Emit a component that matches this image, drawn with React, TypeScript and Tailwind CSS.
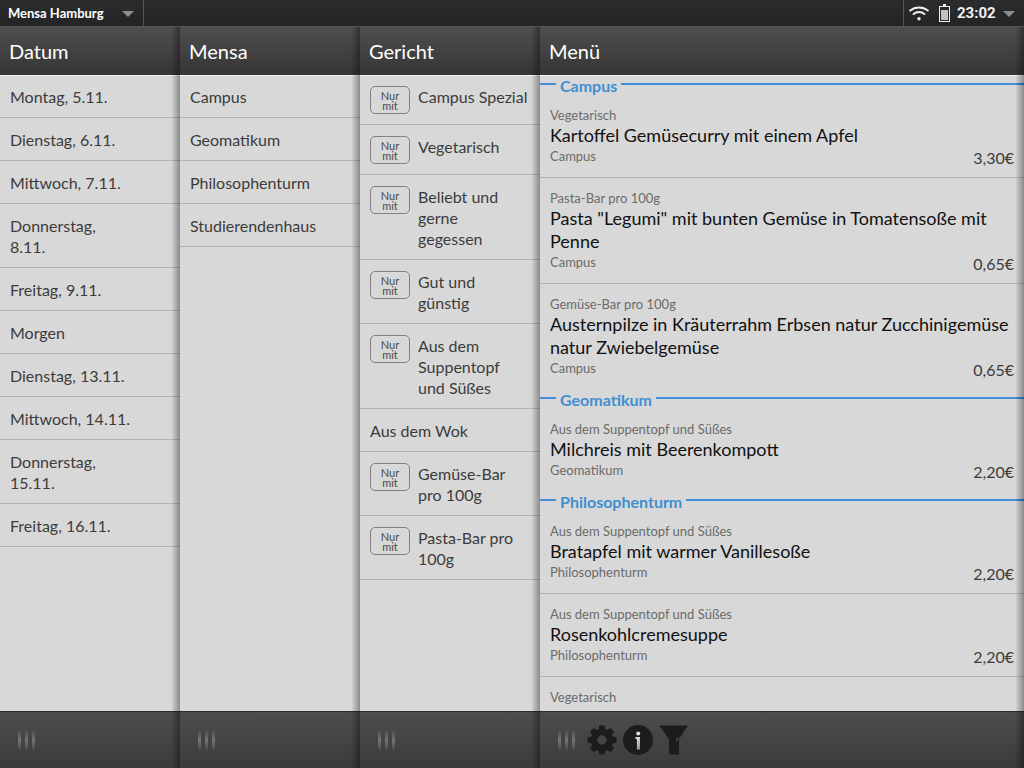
import React from "react";

const Shadow = () => (
  <div className="absolute right-0 top-0 bottom-0 w-[9px] bg-gradient-to-r from-[#00000000] to-[#0000005c] pointer-events-none" />
);

const GripLine = () => (
  <div className="w-[3px] h-[21px] bg-gradient-to-b from-[#4a4a4a] via-[#757575] to-[#454545]" />
);

const Grip = () => (
  <div className="flex gap-[4px] blur-[0.6px]">
    <GripLine />
    <GripLine />
    <GripLine />
  </div>
);

const Gear = () => (
  <svg width="30" height="30" viewBox="0 0 30 30" className="shrink-0">
    <g fill="#1c1c1c">
      {[0, 45, 90, 135, 180, 225, 270, 315].map((a) => (
        <path key={a} d="M11.5 5 L12.3 0.6 H17.7 L18.5 5 Z" transform={`rotate(${a} 15 15)`} />
      ))}
    </g>
    <circle cx="15" cy="15" r="8" fill="none" stroke="#1c1c1c" strokeWidth="6.5" />
  </svg>
);

const Info = () => (
  <svg width="30" height="30" viewBox="0 0 30 30" className="shrink-0">
    <defs>
      <linearGradient id="infoFill" x1="0" y1="0" x2="0" y2="1">
        <stop offset="0" stopColor="#e2e2e2" />
        <stop offset="1" stopColor="#9a9a9a" />
      </linearGradient>
    </defs>
    <circle cx="15" cy="15" r="15" fill="#1c1c1c" />
    <circle cx="15.2" cy="8.5" r="2" fill="#e2e2e2" />
    <path d="M12.5 12h4.4v12.5h-3V14h-1.4z" fill="url(#infoFill)" />
  </svg>
);

const Funnel = () => (
  <svg width="29" height="30" viewBox="0 0 29 30" className="shrink-0">
    <path d="M0 0.5h29L20 14v15.5H10V14z" fill="#1c1c1c" />
    <path d="M17.2 16.5l2.2-4.5" stroke="#6e6e6e" strokeWidth="0.9" fill="none" />
  </svg>
);

const Wifi = () => (
  <svg width="20" height="16" viewBox="0 0 20 16" className="shrink-0">
    <g fill="none" stroke="#f0f0f0" strokeWidth="2" strokeLinecap="round">
      <path d="M1.2 5.6C6 1.4 14 1.4 18.8 5.6" />
      <path d="M4.6 9C7.6 6.4 12.4 6.4 15.4 9" />
    </g>
    <circle cx="10" cy="13.8" r="1.7" fill="#f0f0f0" />
  </svg>
);

const Battery = () => (
  <svg width="11" height="18" viewBox="0 0 11 18" className="shrink-0">
    <rect x="4" y="0" width="3" height="2" fill="#f0f0f0" />
    <rect x="0.5" y="2.5" width="10" height="15" fill="none" stroke="#f0f0f0" strokeWidth="1" />
    <rect x="2" y="6" width="7" height="10" fill="#c0c0c0" />
  </svg>
);

const Triangle = () => (
  <div className="mt-[2px] w-0 h-0 border-l-[6.5px] border-r-[6.5px] border-t-[6px] border-l-transparent border-r-transparent border-t-[#8e8e8e]" />
);

const Header = ({ title }: { title: string }) => (
  <div className="h-[48px] shrink-0 px-[9px] flex items-center text-[20px] text-white bg-gradient-to-b from-[#4f4f4f] to-[#353535]">
    {title}
  </div>
);

const Footer = ({ children }: { children?: React.ReactNode }) => (
  <div className="h-[57px] shrink-0 pl-[18px] flex items-center bg-gradient-to-b from-[#4d4d4d] to-[#3b3b3b] border-t border-[#2b2b2b]">
    {children ?? <Grip />}
  </div>
);

const Row = ({ text }: { text: string }) => (
  <div className="px-[10px] pt-[11px] pb-[10px] text-[16px] leading-[21px] text-[#3c3c3c] border-b border-[#b4b4b4] whitespace-pre-line">
    {text}
  </div>
);

const Badge = () => (
  <div className="shrink-0 w-[40px] h-[28px] mr-[8px] pt-[1px] rounded-[5px] border border-[#808080] flex flex-col items-center justify-center text-[11px] leading-[10px] text-[#4a4a4a]">
    <span>Nur</span>
    <span>mit</span>
  </div>
);

const FilterRow = ({ text, badge = true }: { text: string; badge?: boolean }) => (
  <div className="flex items-start px-[10px] pt-[11px] pb-[10px] text-[16px] leading-[21px] text-[#3c3c3c] border-b border-[#b4b4b4]">
    {badge && <Badge />}
    <span className="whitespace-pre-line">{text}</span>
  </div>
);

const Divider = ({ text, first = false }: { text: string; first?: boolean }) => (
  <div className={`flex items-start h-[19px] shrink-0 ${first ? "mt-[1px]" : ""}`}>
    <div className="w-[16px] h-[2px] mt-[7px] bg-[#3f8fd8] shrink-0" />
    <span className="px-[4px] text-[16px] leading-[19px] font-bold text-[#3f8fd2]">{text}</span>
    <div className="flex-1 h-[2px] mt-[7px] bg-[#3f8fd8]" />
  </div>
);

const Meal = ({
  cat,
  title,
  place,
  price,
  border = true,
}: {
  cat: string;
  title: string;
  place: string;
  price: string;
  border?: boolean;
}) => (
  <div className={`shrink-0 px-[10px] pt-[12px] ${border ? "pb-[9px] border-b border-[#b4b4b4]" : "pb-[10px]"}`}>
    <div className="text-[13px] leading-[17px] text-[#6b6b6b]">{cat}</div>
    <div className="text-[18px] leading-[23px] text-[#111111]">{title}</div>
    <div className="flex justify-between">
      <span className="text-[13px] leading-[18px] text-[#6b6b6b]">{place}</span>
      <span className="text-[16px] leading-[21px] text-[#3c3c3c]">{price}</span>
    </div>
  </div>
);

const listClass = "flex-1 min-h-0 overflow-hidden shadow-[inset_0_1px_0_#f4f4f4]";

export default function App() {
  return (
    <div className="w-[1024px] h-[768px] overflow-hidden flex flex-col bg-[#d8d8d8] font-['Lato',sans-serif]">
      <div className="h-[27px] shrink-0 flex items-stretch justify-between bg-gradient-to-b from-[#2b2c2e] to-[#232426] border-b border-[#555555]">
        <div className="w-[144px] flex items-center justify-between pl-[8px] pr-[9px] border-r border-[#555555]">
          <span className="mt-[2px] text-[13px] font-bold text-white">Mensa Hamburg</span>
          <Triangle />
        </div>
        <div className="w-[121px] flex items-center pl-[5px] border-l border-[#555555]">
          <Wifi />
          <div className="ml-[10px]">
            <Battery />
          </div>
          <span className="ml-[7px] text-[15px] font-bold text-[#f0f0f0] font-['Roboto',sans-serif]">23:02</span>
          <div className="ml-[7px]">
            <Triangle />
          </div>
        </div>
      </div>
      <div className="flex-1 min-h-0 flex">
        <div className="relative w-[180px] flex flex-col">
          <Header title="Datum" />
          <div className={listClass}>
            {["Montag, 5.11.", "Dienstag, 6.11.", "Mittwoch, 7.11.", "Donnerstag,\n8.11.", "Freitag, 9.11.", "Morgen", "Dienstag, 13.11.", "Mittwoch, 14.11.", "Donnerstag,\n15.11.", "Freitag, 16.11."].map((t) => (
              <Row key={t} text={t} />
            ))}
          </div>
          <Footer />
          <Shadow />
        </div>
        <div className="relative w-[180px] flex flex-col">
          <Header title="Mensa" />
          <div className={listClass}>
            {["Campus", "Geomatikum", "Philosophenturm", "Studierendenhaus"].map((t) => (
              <Row key={t} text={t} />
            ))}
          </div>
          <Footer />
          <Shadow />
        </div>
        <div className="relative w-[180px] flex flex-col">
          <Header title="Gericht" />
          <div className={listClass}>
            <FilterRow text="Campus Spezial" />
            <FilterRow text="Vegetarisch" />
            <FilterRow text={"Beliebt und\ngerne\ngegessen"} />
            <FilterRow text={"Gut und\ngünstig"} />
            <FilterRow text={"Aus dem\nSuppentopf\nund Süßes"} />
            <FilterRow text="Aus dem Wok" badge={false} />
            <FilterRow text={"Gemüse-Bar\npro 100g"} />
            <FilterRow text={"Pasta-Bar pro\n100g"} />
          </div>
          <Footer />
          <Shadow />
        </div>
        <div className="relative flex-1 min-w-0 flex flex-col">
          <Header title="Menü" />
          <div className={`${listClass} flex flex-col`}>
            <Divider text="Campus" first />
            <Meal cat="Vegetarisch" title="Kartoffel Gemüsecurry mit einem Apfel" place="Campus" price="3,30€" />
            <Meal cat="Pasta-Bar pro 100g" title={'Pasta "Legumi" mit bunten Gemüse in Tomatensoße mit Penne'} place="Campus" price="0,65€" />
            <Meal cat="Gemüse-Bar pro 100g" title="Austernpilze in Kräuterrahm Erbsen natur Zucchinigemüse natur Zwiebelgemüse" place="Campus" price="0,65€" border={false} />
            <Divider text="Geomatikum" />
            <Meal cat="Aus dem Suppentopf und Süßes" title="Milchreis mit Beerenkompott" place="Geomatikum" price="2,20€" border={false} />
            <Divider text="Philosophenturm" />
            <Meal cat="Aus dem Suppentopf und Süßes" title="Bratapfel mit warmer Vanillesoße" place="Philosophenturm" price="2,20€" />
            <Meal cat="Aus dem Suppentopf und Süßes" title="Rosenkohlcremesuppe" place="Philosophenturm" price="2,20€" />
            <Meal cat="Vegetarisch" title="Kartoffelgratin mit Blattspinat und Tomatensoße mit Käse" place="Campus" price="2,20€" />
          </div>
          <Footer>
            <div className="flex items-center">
              <Grip />
              <div className="flex items-center gap-[6px] ml-[12px]">
                <Gear />
                <Info />
                <Funnel />
              </div>
            </div>
          </Footer>
          <Shadow />
        </div>
      </div>
    </div>
  );
}
